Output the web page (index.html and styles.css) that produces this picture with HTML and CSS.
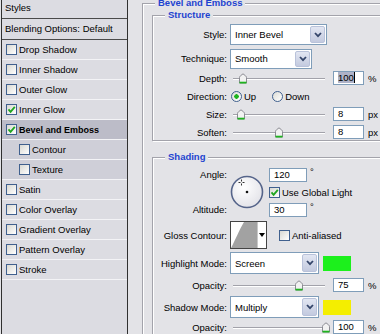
FILE: index.html
```html
<!DOCTYPE html>
<html lang="en">
<head>
	<meta charset="UTF-8">
	<title>Layer Style - Bevel and Emboss</title>
	<link rel="stylesheet" href="styles.css">
</head>
<body>
	<div class="dialog">
		<div class="styles-list">
			<div class="list-head">Styles</div>
			<div class="list-blend">Blending Options: Default</div>
			<div class="list-item"><span class="check"></span>Drop Shadow</div>
			<div class="list-item"><span class="check"></span>Inner Shadow</div>
			<div class="list-item"><span class="check"></span>Outer Glow</div>
			<div class="list-item"><span class="check"><svg width="9" height="9" viewBox="0 0 9 9"><path d="M1.5 4.3 L3.6 6.8 L7.8 1.8" fill="none" stroke="#1fa51f" stroke-width="1.8"/></svg></span>Inner Glow</div>
			<div class="list-item selected"><span class="check"><svg width="9" height="9" viewBox="0 0 9 9"><path d="M1.5 4.3 L3.6 6.8 L7.8 1.8" fill="none" stroke="#1fa51f" stroke-width="1.8"/></svg></span><b>Bevel and Emboss</b></div>
			<div class="list-item sub"><span class="check"></span>Contour</div>
			<div class="list-item sub"><span class="check"></span>Texture</div>
			<div class="list-item"><span class="check"></span>Satin</div>
			<div class="list-item"><span class="check"></span>Color Overlay</div>
			<div class="list-item"><span class="check"></span>Gradient Overlay</div>
			<div class="list-item"><span class="check"></span>Pattern Overlay</div>
			<div class="list-item"><span class="check"></span>Stroke</div>
		</div>

		<div class="options">
			<div class="group outer">
				<div class="group-title">Bevel and Emboss</div>

				<!-- Structure -->
				<div class="group inner structure">
					<div class="group-title">Structure</div>
					<div class="row select-row">
						<span class="label">Style:</span>
						<div class="select style-select">
							<span class="select-text">Inner Bevel</span>
							<span class="arrow"><svg width="8" height="6" viewBox="0 0 8 6"><path d="M1 1 L4 4.2 L7 1" fill="none" stroke="#34456a" stroke-width="1.8"/></svg></span>
						</div>
					</div>
					<div class="row select-row">
						<span class="label">Technique:</span>
						<div class="select technique-select">
							<span class="select-text">Smooth</span>
							<span class="arrow"><svg width="8" height="6" viewBox="0 0 8 6"><path d="M1 1 L4 4.2 L7 1" fill="none" stroke="#34456a" stroke-width="1.8"/></svg></span>
						</div>
					</div>
					<div class="row">
						<span class="label">Depth:</span>
						<div class="slider"><svg class="knob" style="left:5px" width="10" height="11" viewBox="0 0 10 11"><path d="M1.5 10 V4.6 Q1.5 3.6 2.4 2.9 L5 0.8 L7.6 2.9 Q8.5 3.6 8.5 4.6 V10 Z" fill="#f2f2f2" stroke="#8b8b93"/><path d="M1.5 9.6 H8.5" stroke="#1eb41e" stroke-width="1.8"/></svg></div>
						<span class="field"><span class="sel-text">100</span></span>
						<span class="unit">%</span>
					</div>
					<div class="row">
						<span class="label">Direction:</span>
						<span class="radio on"></span><span class="radio-text">Up</span>
						<span class="radio down"></span><span class="radio-text">Down</span>
					</div>
					<div class="row">
						<span class="label">Size:</span>
						<div class="slider"><svg class="knob" style="left:3px" width="10" height="11" viewBox="0 0 10 11"><path d="M1.5 10 V4.6 Q1.5 3.6 2.4 2.9 L5 0.8 L7.6 2.9 Q8.5 3.6 8.5 4.6 V10 Z" fill="#f2f2f2" stroke="#8b8b93"/><path d="M1.5 9.6 H8.5" stroke="#1eb41e" stroke-width="1.8"/></svg></div>
						<span class="field">8</span>
						<span class="unit">px</span>
					</div>
					<div class="row">
						<span class="label">Soften:</span>
						<div class="slider"><svg class="knob" style="left:41px" width="10" height="11" viewBox="0 0 10 11"><path d="M1.5 10 V4.6 Q1.5 3.6 2.4 2.9 L5 0.8 L7.6 2.9 Q8.5 3.6 8.5 4.6 V10 Z" fill="#f2f2f2" stroke="#8b8b93"/><path d="M1.5 9.6 H8.5" stroke="#1eb41e" stroke-width="1.8"/></svg></div>
						<span class="field">8</span>
						<span class="unit">px</span>
					</div>
				</div>

				<!-- Shading -->
				<div class="group inner shading">
					<div class="group-title">Shading</div>
					<div class="angle">
						<span class="label angle-label">Angle:</span>
						<svg class="dial" width="34" height="34" viewBox="0 0 34 34">
							<defs>
								<radialGradient id="dialFill" cx="0.4" cy="0.35" r="0.7">
									<stop offset="0" stop-color="#ffffff"/>
									<stop offset="1" stop-color="#e2e2e8"/>
								</radialGradient>
							</defs>
							<circle cx="17" cy="17" r="15.5" fill="url(#dialFill)" stroke="#55648a" stroke-width="1.6"/>
							<circle cx="17" cy="17" r="1.3" fill="#111"/>
							<path d="M11.5 4.5 v2 M11.5 8.5 v2 M8.5 7.5 h2 M12.5 7.5 h2" stroke="#333" stroke-width="1"/>
						</svg>
						<span class="angle-value"><span class="field wide">120</span><span class="deg">°</span></span>
						<span class="global-light"><span class="check"><svg width="9" height="9" viewBox="0 0 9 9"><path d="M1.5 4.3 L3.6 6.8 L7.8 1.8" fill="none" stroke="#1fa51f" stroke-width="1.8"/></svg></span>Use Global Light</span>
						<span class="label altitude-label">Altitude:</span>
						<span class="altitude-value"><span class="field wide">30</span><span class="deg">°</span></span>
					</div>
					<div class="row contour-row">
						<span class="label">Gloss Contour:</span>
						<div class="contour">
							<svg width="26" height="26" viewBox="0 0 26 26"><path d="M0 26 C4 19 8 8 13 0 L26 0 L26 26 Z" fill="#a2a2a2"/></svg>
							<span class="contour-arrow"></span>
						</div>
						<span class="check anti"></span><span class="check-text">Anti-aliased</span>
					</div>
					<div class="row mode-row">
						<span class="label">Highlight Mode:</span>
						<div class="select mode-select">
							<span class="select-text">Screen</span>
							<span class="arrow"><svg width="8" height="6" viewBox="0 0 8 6"><path d="M1 1 L4 4.2 L7 1" fill="none" stroke="#34456a" stroke-width="1.8"/></svg></span>
						</div>
						<span class="swatch highlight"></span>
					</div>
					<div class="row">
						<span class="label">Opacity:</span>
						<div class="slider"><svg class="knob" style="left:61px" width="10" height="11" viewBox="0 0 10 11"><path d="M1.5 10 V4.6 Q1.5 3.6 2.4 2.9 L5 0.8 L7.6 2.9 Q8.5 3.6 8.5 4.6 V10 Z" fill="#f2f2f2" stroke="#8b8b93"/><path d="M1.5 9.6 H8.5" stroke="#1eb41e" stroke-width="1.8"/></svg></div>
						<span class="field">75</span>
						<span class="unit">%</span>
					</div>
					<div class="row mode-row">
						<span class="label">Shadow Mode:</span>
						<div class="select mode-select">
							<span class="select-text">Multiply</span>
							<span class="arrow"><svg width="8" height="6" viewBox="0 0 8 6"><path d="M1 1 L4 4.2 L7 1" fill="none" stroke="#34456a" stroke-width="1.8"/></svg></span>
						</div>
						<span class="swatch shadow"></span>
					</div>
					<div class="row last">
						<span class="label">Opacity:</span>
						<div class="slider"><svg class="knob" style="left:88px" width="10" height="11" viewBox="0 0 10 11"><path d="M1.5 10 V4.6 Q1.5 3.6 2.4 2.9 L5 0.8 L7.6 2.9 Q8.5 3.6 8.5 4.6 V10 Z" fill="#f2f2f2" stroke="#8b8b93"/><path d="M1.5 9.6 H8.5" stroke="#1eb41e" stroke-width="1.8"/></svg></div>
						<span class="field">100</span>
						<span class="unit">%</span>
					</div>
				</div>
			</div>
		</div>
	</div>
</body>
</html>
```

FILE: styles.css
```css
* {
	box-sizing: border-box;
}

body {
	margin: 0;
	width: 380px;
	height: 334px;
	overflow: hidden;
	background-color: #e3e3e7;
	font-family: "Liberation Sans", Arial, sans-serif;
	font-size: 9.5px;
	color: #000;
}

.dialog {
	display: flex;
	height: 334px;
}

/* Left list of styles */
.styles-list {
	flex: none;
	width: 127px;
	height: 100%;
	margin-left: 1px;
	border-left: 1px solid #303030;
	border-right: 1px solid #303030;
	background-color: #dcdce2;
}

.list-head {
	height: 19px;
	line-height: 15px;
	padding-left: 3px;
	border-bottom: 1px solid #4a4a4a;
}

.list-blend {
	height: 21px;
	line-height: 20px;
	padding-left: 3px;
	border-bottom: 1px solid #4a4a4a;
}

.list-item {
	display: flex;
	align-items: center;
	height: 20px;
	padding-left: 4px;
	border-bottom: 1px solid #f3f3f6;
}

.list-item.selected {
	background-color: #bcbcc8;
}

.list-item.sub {
	padding-left: 17px;
	background-color: #cfcfd8;
}

.list-item b {
	font-size: 9px;
}

.check {
	display: flex;
	align-items: center;
	justify-content: center;
	flex: none;
	width: 11px;
	height: 11px;
	margin-right: 2px;
	border: 1px solid #40608e;
	background: linear-gradient(135deg, #d8d8d2, #ffffff);
}

/* Right options */
.options {
	flex: 1;
	padding-left: 14px;
}

.group {
	border: 1px solid #a3a3ab;
	box-shadow: inset 1px 1px 0 #fff, 1px 1px 0 #fff;
}

.group.outer {
	width: 300px;
	height: 400px;
	margin-top: 3px;
}

.group.inner {
	width: 240px;
	margin-left: 9px;
}

.structure {
	height: 126px;
	margin-top: 6px;
}

.shading {
	height: 200px;
	margin-top: 16px;
}

.group-title {
	width: fit-content;
	margin: -7px 0 3px 12px;
	padding: 0 3px;
	line-height: 12px;
	background-color: #e3e3e7;
	color: #1e44d0;
	font-weight: bold;
}

.row {
	display: flex;
	align-items: center;
	height: 18px;
}

.select-row {
	height: 21px;
}

.select-row + .select-row {
	margin-top: 3px;
}

.label {
	flex: none;
	width: 77px;
	padding-right: 3px;
	text-align: right;
}

.select {
	display: flex;
	align-items: center;
	height: 21px;
	padding: 1px;
	border: 1px solid #7f9db9;
	background-color: #fff;
}

.style-select {
	width: 97px;
}

.technique-select {
	width: 82px;
	height: 20px;
}

.mode-select {
	width: 89px;
	height: 22px;
}

.select-text {
	padding-left: 3px;
}

.arrow {
	display: flex;
	align-items: center;
	justify-content: center;
	width: 15px;
	height: 100%;
	margin-left: auto;
	border: 1px solid #b9c2da;
	border-radius: 2px;
	background: linear-gradient(#e2e6f2, #c3cadf);
}

.slider {
	position: relative;
	flex: none;
	width: 92px;
	height: 18px;
	margin-left: 3px;
}

.slider::before {
	content: "";
	position: absolute;
	left: 0;
	right: 0;
	top: 9px;
	height: 1px;
	background-color: #a2a2aa;
	box-shadow: 0 1px 0 #fff;
}

.knob {
	position: absolute;
	top: 4px;
}

.field {
	flex: none;
	width: 31px;
	height: 14px;
	margin-left: 8px;
	padding-left: 4px;
	border: 1px solid #7f9db9;
	background-color: #fff;
	line-height: 12px;
}

.field.wide {
	width: 38px;
	margin-left: 1px;
}

.sel-text {
	background-color: #aeb2c8;
	border-right: 1px solid #000;
}

.unit {
	margin-left: 4px;
}

.radio {
	flex: none;
	width: 11px;
	height: 11px;
	margin-left: 1px;
	border: 1px solid #40608e;
	border-radius: 50%;
	background: linear-gradient(135deg, #dcdcd6, #ffffff);
}

.radio.on {
	background: radial-gradient(circle, #1eb41e 0 2px, transparent 2.5px), linear-gradient(135deg, #dcdcd6, #ffffff);
}

.radio.down {
	margin-left: 16px;
}

.radio-text {
	margin-left: 2px;
}

/* Angle and altitude */
.angle {
	display: grid;
	grid-template-columns: 77px 38px auto;
	grid-template-rows: 17px 18px 17px;
	align-items: center;
}

.angle-label {
	grid-column: 1;
	grid-row: 1;
}

.altitude-label {
	grid-column: 1;
	grid-row: 3;
}

.dial {
	grid-column: 2;
	grid-row: 1 / 4;
}

.angle-value,
.altitude-value,
.global-light {
	display: flex;
	align-items: center;
	grid-column: 3;
}

.angle-value {
	grid-row: 1;
}

.global-light {
	grid-row: 2;
	padding-left: 1px;
}

.altitude-value {
	grid-row: 3;
}

.deg {
	align-self: flex-start;
	margin-left: 3px;
	line-height: 8px;
}

.contour-row {
	height: 30px;
	margin-top: 2px;
}

.contour {
	display: flex;
	width: 37px;
	height: 28px;
	border: 1px solid #444;
	background-color: #fff;
}

.contour-arrow {
	display: flex;
	align-items: center;
	justify-content: center;
	flex: 1;
	border-left: 1px solid #c8c8c8;
}

.contour-arrow::after {
	content: "";
	border-left: 3px solid transparent;
	border-right: 3px solid transparent;
	border-top: 4px solid #000;
}

.check.anti {
	margin-left: 12px;
}

.mode-row {
	height: 22px;
	margin-top: 2px;
}

.mode-row + .row {
	margin-top: 2px;
}

.swatch {
	width: 28px;
	height: 15px;
	margin-left: 4px;
}

.swatch.highlight {
	background-color: #1cf01c;
}

.swatch.shadow {
	background-color: #f4ee00;
}

.row.last {
	margin-top: 0;
}
```
